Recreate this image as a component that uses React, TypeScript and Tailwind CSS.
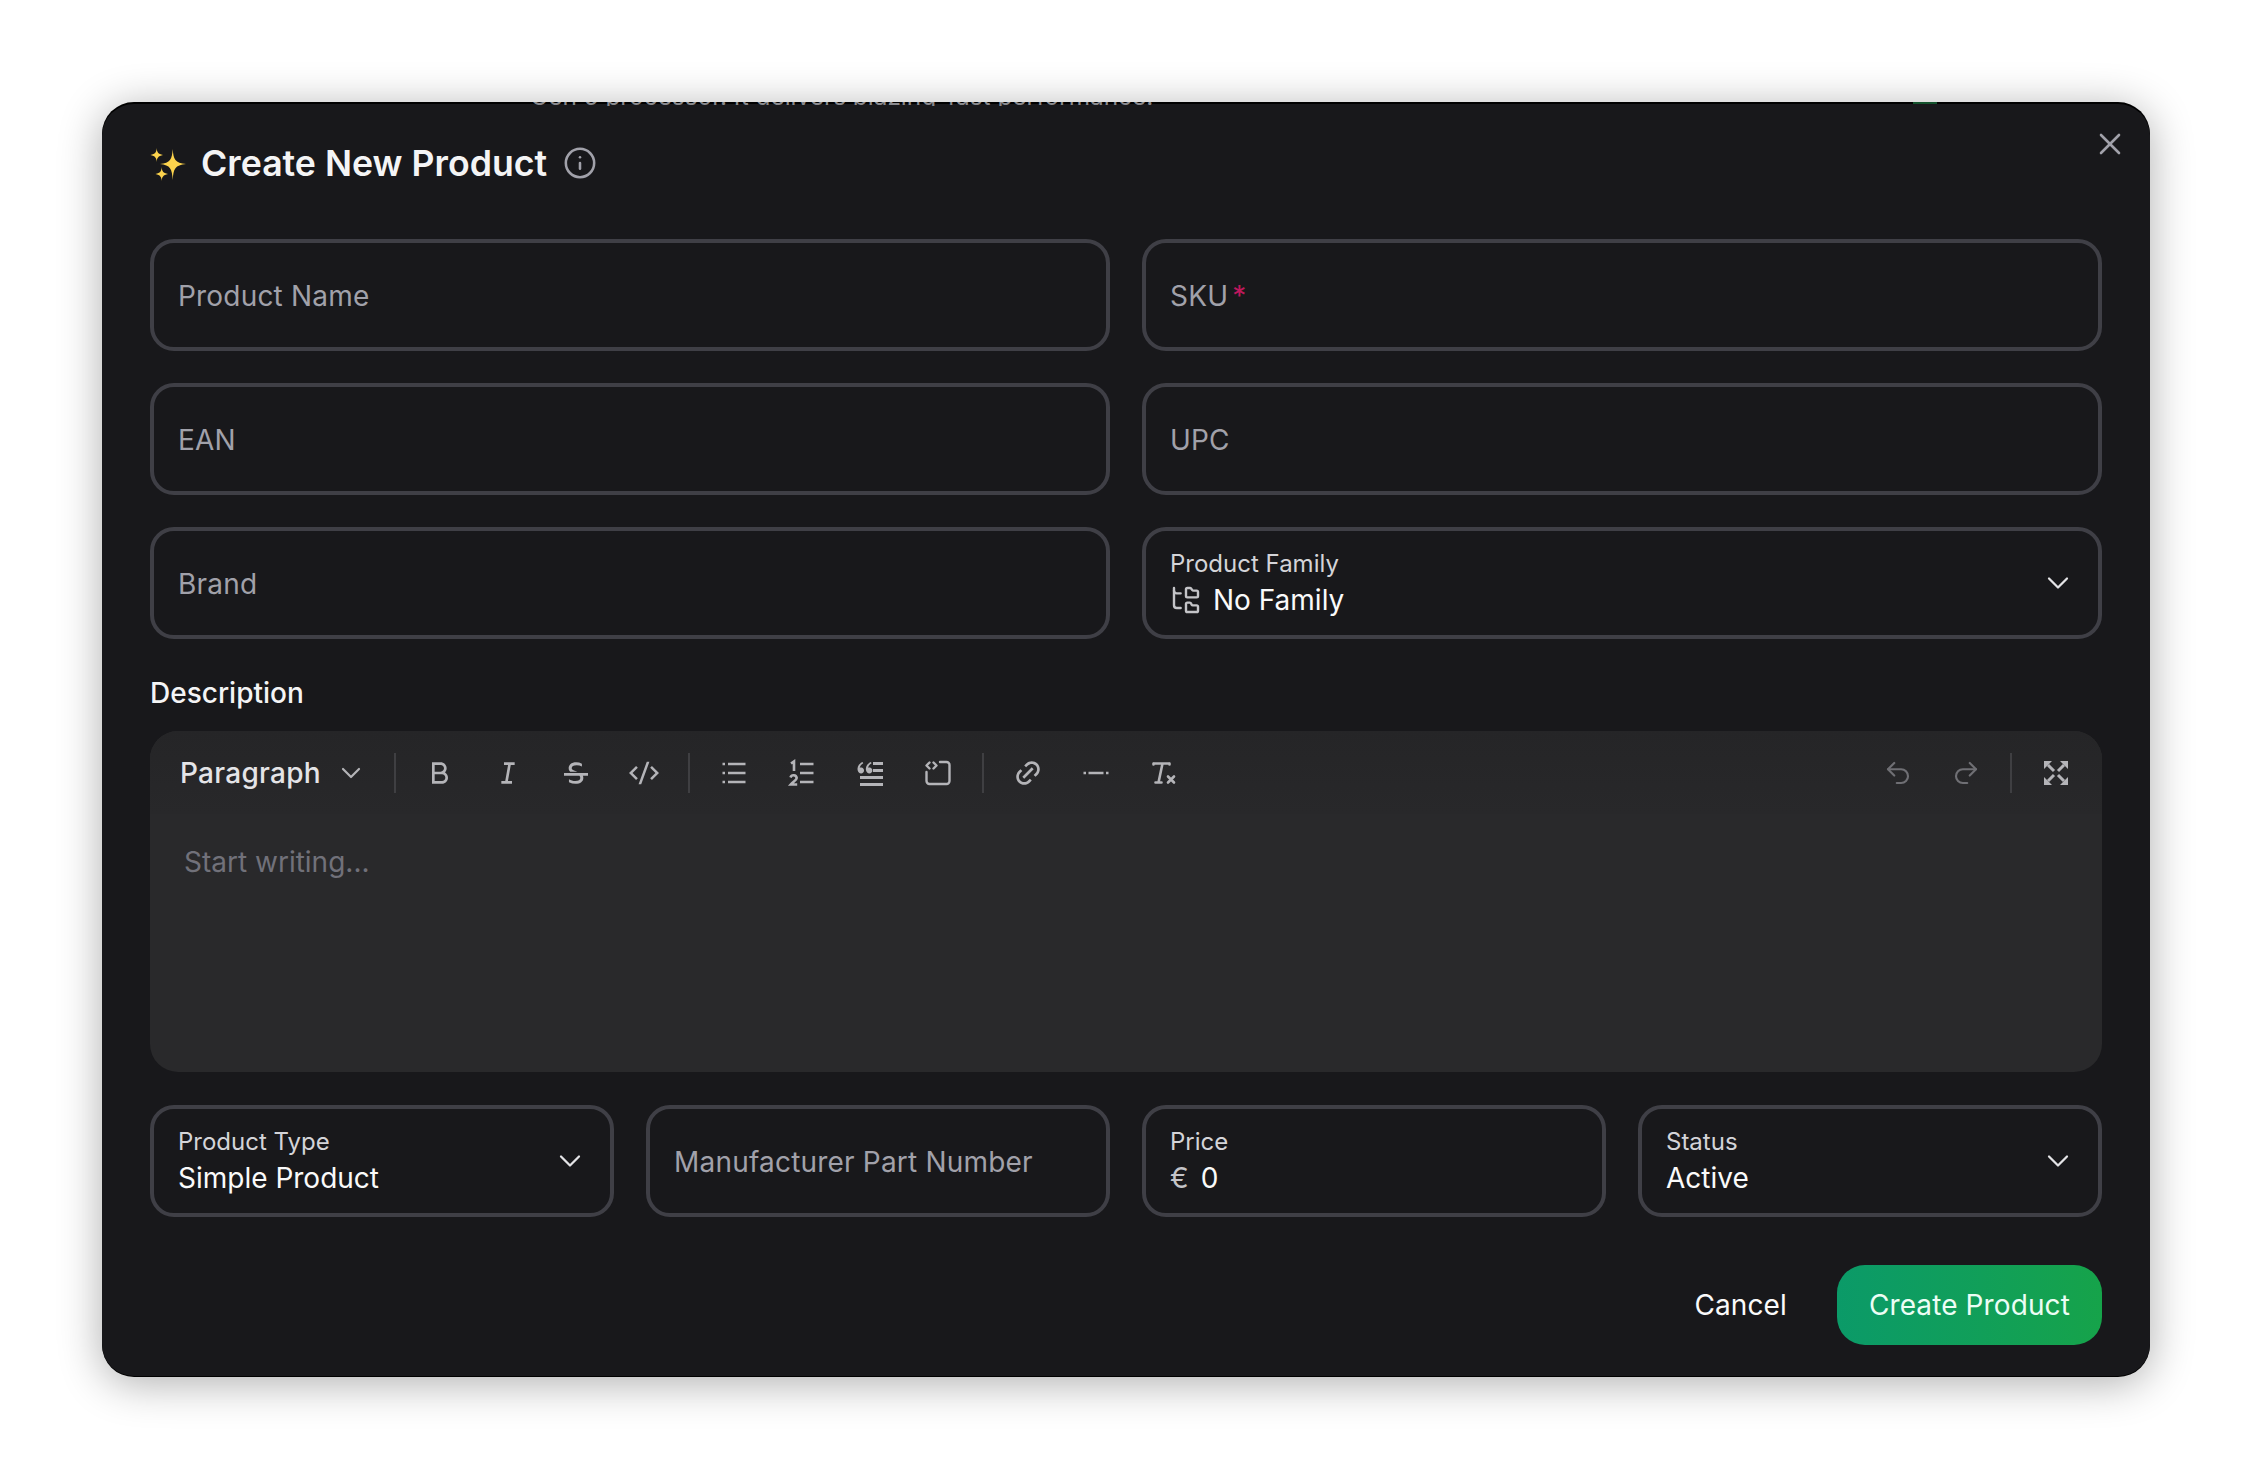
import type { ReactNode } from "react";
import { ChevronDown, FolderTree, Info, Redo2, Undo2, X } from "lucide-react";
import {
  RiBold,
  RiCodeSSlashLine,
  RiDoubleQuotesL,
  RiItalic,
  RiLinkM,
  RiSeparator,
  RiStrikethrough,
} from "react-icons/ri";

function Sparkles() {
  return (
    <svg width="36" height="36" viewBox="0 0 36 36" fill="#fcd34d">
      <path d="M22.7 4 C23.4 14 25 18 36 19 C25 20 23.4 24 22.7 35 C22 24 20.4 20 10 19 C20.4 18 22 14 22.7 4Z" />
      <path d="M6.7 3 C7 7 8 9 13 10 C8 11 7 13 6.7 17 C6.4 13 5.4 11 0.5 10 C5.4 9 6.4 7 6.7 3Z" />
      <path d="M11.7 22 C12 26 13 28 18 29 C13 30 12 32 11.7 36 C11.4 32 10.4 30 5.5 29 C10.4 28 11.4 26 11.7 22Z" />
    </svg>
  );
}

function ExpandIcon() {
  return (
    <svg width="26" height="26" viewBox="0 0 26 26" fill="#b4b4b8" stroke="none">
      <path d="M1 1h8L1 9zM25 1h-8l8 8zM1 25h8l-8-8zM25 25h-8l8-8z" />
      <path d="M5 5l6 6M21 5l-6 6M5 21l6-6M21 21l-6-6" stroke="#b4b4b8" strokeWidth="3" fill="none" />
    </svg>
  );
}

function BulletIcon() {
  return (
    <svg width="30" height="30" viewBox="0 0 30 30" fill="none" stroke="currentColor" strokeWidth="2.5">
      <path d="M9 6h17.5M9 15h17.5M9 24h17.5" />
      <path d="M3.5 6h2.5M3.5 15h2.5M3.5 24h2.5" />
    </svg>
  );
}

function OrderedIcon() {
  return (
    <svg width="30" height="30" viewBox="0 0 30 30" fill="none" stroke="currentColor" strokeWidth="2.6">
      <path d="M4 5.5 7 3.5V13" />
      <path d="M3.5 19.5a3.2 3.2 0 0 1 6.2.5c0 2-3.5 3.5-6 6.5h6.5" />
      <path d="M13 6h13.5M13 15h13.5M13 24h13.5" strokeWidth="2.4" />
    </svg>
  );
}

function CodeBlockIcon() {
  return (
    <svg width="30" height="30" viewBox="0 0 30 30" fill="none" stroke="currentColor" strokeWidth="2.4" strokeLinecap="round" strokeLinejoin="round">
      <path d="M17 4h6.5a3 3 0 0 1 3 3v16a3 3 0 0 1-3 3h-17a3 3 0 0 1-3-3v-9" />
      <path d="M6.5 4.5 3.5 7.5l3 3M10.5 4.5l3 3-3 3" />
    </svg>
  );
}

function ClearIcon() {
  return (
    <svg width="30" height="30" viewBox="0 0 30 30" fill="none" stroke="currentColor" strokeWidth="2.6" strokeLinecap="round">
      <path d="M5 5.5h15M4.5 5.5v1M20.5 5.5v1M13.5 5.5 9.5 24.5M6.5 24.5h6" />
      <path d="M19 18.5l6 6M25 18.5l-6 6" />
    </svg>
  );
}

function Box({ children }: { children: ReactNode }) {
  return (
    <div className="flex h-[112px] items-center justify-between rounded-[24px] border-4 border-[#3f3f46] pl-6 pr-[22px]">
      {children}
    </div>
  );
}

function TextField({ label, required }: { label: string; required?: boolean }) {
  return (
    <Box>
      <span className="pt-[2px] text-[28px] tracking-[0.007em] text-[#a1a1aa]">
        {label}
        {required && <span className="ml-1 text-[#be185d]">*</span>}
      </span>
    </Box>
  );
}

function SelectField({ label, children, chevron = true }: { label: string; children: ReactNode; chevron?: boolean }) {
  return (
    <Box>
      <div className="flex flex-col">
        <span className="text-[24px] leading-[34px] text-[#d4d4d8]">{label}</span>
        <div className="flex items-center text-[28px] leading-[38px] text-[#fafafa]">{children}</div>
      </div>
      {chevron && <ChevronDown size={36} strokeWidth={1.5} className="text-[#e4e4e7]" />}
    </Box>
  );
}

function Tool({ children }: { children: ReactNode }) {
  return <button className="flex h-[44px] w-[68px] items-center justify-center text-[#b4b4b8]">{children}</button>;
}

function Sep() {
  return <div className="mx-[10px] h-[40px] w-[2px] bg-[#3f3f42]" />;
}

export default function App() {
  return (
    <div className="flex h-[1480px] justify-center overflow-hidden bg-white pt-[102px] font-['Inter',sans-serif]">
      <div className="relative h-[1275px] w-[2048px] rounded-[32px] bg-black pb-[1px] pt-[2px] shadow-[0_6px_44px_rgba(0,0,0,0.32)]">
        {/* bits of the page behind the dialog */}
        <div className="absolute left-[428px] top-0 z-10 h-[4px] w-[640px] overflow-hidden">
          <div className="-mt-[19px] whitespace-nowrap text-[24.4px] leading-[26px] text-[#8a8a8e]">
            Gen 5 processor. It delivers blazing-fast performance.
          </div>
        </div>
        <div className="absolute left-[1811px] top-0 z-10 h-[2px] w-[24px] bg-[#14532d]" />

        <div className="relative h-full rounded-[32px] bg-[#18181b] px-12 pb-8 pt-[37px]">
          <button className="absolute right-[22px] top-[22px] text-[#a1a1aa]">
            <X size={36} strokeWidth={1.75} />
          </button>

          <div className="flex h-[44px] items-center">
            <Sparkles />
            <h2 className="ml-[15px] text-[35.7px] font-semibold leading-[44px] text-[#f4f4f5]">Create New Product</h2>
            <Info size={34} strokeWidth={1.8} className="ml-4 text-[#a1a1aa]" />
          </div>

          <div className="mt-[54px] grid grid-cols-2 gap-8">
            <TextField label="Product Name" />
            <TextField label="SKU" required />
            <TextField label="EAN" />
            <TextField label="UPC" />
            <TextField label="Brand" />
            <SelectField label="Product Family">
              <FolderTree size={32} strokeWidth={1.8} className="mr-[11px] text-[#c4c4c8]" />
              No Family
            </SelectField>
          </div>

          <div className="mt-[34px] text-[28px] font-medium leading-[40px] text-[#f4f4f5]">Description</div>

          <div className="mt-[18px] h-[341px] overflow-hidden rounded-[28px] bg-[#29292b]">
            <div className="flex h-[83px] items-center bg-gradient-to-b from-[#252527] to-[#28282a] pr-3">
              <button className="ml-[30px] flex items-center text-[28px] font-medium tracking-[0.01em] text-[#e4e4e7]">
                Paragraph
                <ChevronDown size={32} strokeWidth={1.6} className="ml-[14px] text-[#b4b4b8]" />
              </button>
              <div className="mx-[10px] ml-[27px] h-[40px] w-[2px] bg-[#3f3f42]" />
              <Tool><RiBold size={32} /></Tool>
              <Tool><RiItalic size={32} /></Tool>
              <Tool><RiStrikethrough size={32} /></Tool>
              <Tool><RiCodeSSlashLine size={30} /></Tool>
              <Sep />
              <Tool><BulletIcon /></Tool>
              <Tool><OrderedIcon /></Tool>
              <Tool>
                <span className="relative block h-[30px] w-[30px]">
                  <RiDoubleQuotesL size={20} className="absolute left-0 top-0" />
                  <span className="absolute left-[18px] top-[4px] h-[3px] w-[10px] bg-[#b4b4b8]" />
                  <span className="absolute left-[18px] top-[11px] h-[3px] w-[10px] bg-[#b4b4b8]" />
                  <span className="absolute left-[5px] top-[18px] h-[3px] w-[23px] bg-[#b4b4b8]" />
                  <span className="absolute left-[5px] top-[25px] h-[3px] w-[23px] bg-[#b4b4b8]" />
                </span>
              </Tool>
              <Tool><CodeBlockIcon /></Tool>
              <Sep />
              <Tool><RiLinkM size={32} /></Tool>
              <Tool><RiSeparator size={30} /></Tool>
              <Tool><ClearIcon /></Tool>
              <div className="ml-auto flex items-center">
                <button className="flex h-[44px] w-[68px] items-center justify-center text-[#6f6f74]">
                  <Undo2 size={30} strokeWidth={1.7} />
                </button>
                <button className="flex h-[44px] w-[68px] items-center justify-center text-[#6f6f74]">
                  <Redo2 size={30} strokeWidth={1.7} />
                </button>
                <Sep />
                <Tool><ExpandIcon /></Tool>
              </div>
            </div>
            <div className="pl-[34px] pt-[31px] text-[28px] leading-[34px] text-[#71717a]">Start writing...</div>
          </div>

          <div className="mt-[33px] grid grid-cols-4 gap-8">
            <SelectField label="Product Type">Simple Product</SelectField>
            <TextField label="Manufacturer Part Number" />
            <SelectField label="Price" chevron={false}>
              <span className="mr-3 text-[#c4c4c8]">€</span>0
            </SelectField>
            <SelectField label="Status">Active</SelectField>
          </div>

          <div className="mt-[48px] flex items-center justify-end gap-[18px]">
            <button className="px-8 text-[28px] tracking-[0.004em] text-[#fafafa]">Cancel</button>
            <button className="h-[80px] rounded-[28px] bg-gradient-to-r from-[#0b9a68] to-[#16a34a] px-8 text-[28px] tracking-[0.004em] text-[#ecfdf5]">
              Create Product
            </button>
          </div>
        </div>
      </div>
    </div>
  );
}
